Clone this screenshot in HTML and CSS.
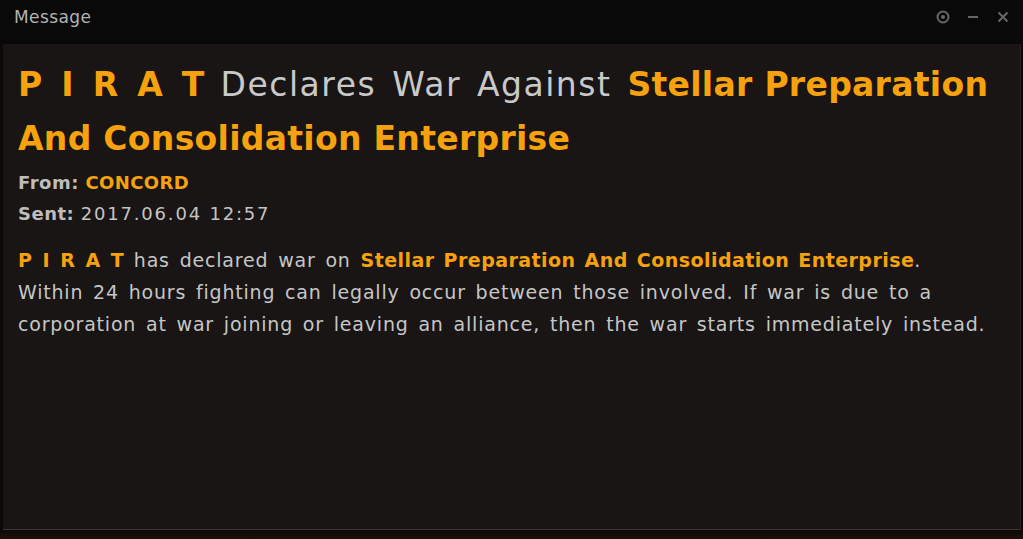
FILE: index.html
```html
<!DOCTYPE html>
<html>
<head>
<meta charset="utf-8">
<link rel="stylesheet" href="styles.css">
</head>
<body>
<div class="window">
  <div class="titlebar">
    <span class="title">Message</span>
    <div class="controls">
      <svg class="icon" width="16" height="16" viewBox="0 0 16 16"><circle cx="8" cy="8" r="5.5" fill="none" stroke="#666" stroke-width="2"/><circle cx="8" cy="8" r="2" fill="#666"/></svg>
      <svg class="icon" width="16" height="16" viewBox="0 0 16 16"><rect x="3" y="7" width="10" height="2" fill="#666"/></svg>
      <svg class="icon" width="16" height="16" viewBox="0 0 16 16"><path d="M3.5 3.5 L12.5 12.5 M12.5 3.5 L3.5 12.5" stroke="#666" stroke-width="2"/></svg>
    </div>
  </div>
  <div class="panel">
    <h1 class="headline"><span class="hl spaced">P I R A T</span> Declares War Against <span class="hl">Stellar Preparation And Consolidation Enterprise</span></h1>
    <div class="meta">
      <div class="meta-row"><span class="label">From:</span> <span class="hl">CONCORD</span></div>
      <div class="meta-row"><span class="label">Sent:</span> <span class="date">2017.06.04 12:57</span></div>
    </div>
    <p class="body"><span class="hl spaced">P I R A T</span> has declared war on <span class="hl">Stellar Preparation And Consolidation Enterprise</span>.<br>Within 24 hours fighting can legally occur between those involved. If war is due to a corporation at war joining or leaving an alliance, then the war starts immediately instead.</p>
  </div>
  <div class="footer-strip"></div>
</div>
</body>
</html>
```

FILE: styles.css
```css
* { box-sizing: border-box; }
html, body { margin: 0; padding: 0; }
body {
  width: 1023px;
  height: 539px;
  overflow: hidden;
  background: #0a0909;
  font-family: "DejaVu Sans", sans-serif;
}
.window {
  display: flex;
  flex-direction: column;
  height: 539px;
}
.titlebar {
  height: 44px;
  display: flex;
  align-items: flex-start;
  justify-content: space-between;
  padding: 7px 10px 0 14px;
}
.title {
  color: #b3b3b3;
  font-size: 17px;
  letter-spacing: 0.4px;
}
.controls {
  display: flex;
  gap: 14px;
  padding: 2px 2px 0 0;
}
.panel {
  margin: 0 2px 0 3px;
  height: 486px;
  background: #181514;
  border-bottom: 1px solid #3a3632;
  border-right: 1px solid #26221f;
  padding: 14px 15px 0 15px;
}
.headline {
  margin: 0;
  font-size: 33px;
  font-weight: normal;
  line-height: 54px;
  color: #c9c9c9;
  letter-spacing: 1.5px;
  word-spacing: 4px;
}
.hl {
  color: #f6a20e;
  font-weight: bold;
}
.headline .hl { letter-spacing: 0.3px; word-spacing: 0; }
.headline .spaced { letter-spacing: 0.3px; word-spacing: 7px; }
.meta {
  margin-top: 1px;
  font-size: 18px;
  color: #c4c4c4;
  letter-spacing: 0.8px;
}
.meta-row { line-height: 31px; }
.meta .hl { letter-spacing: 0.4px; }
.label { font-weight: bold; color: #bdbdbd; letter-spacing: 0.5px; }
.date { letter-spacing: 1.8px; }
.body {
  margin: 15px 0 0 0;
  font-size: 19px;
  line-height: 32px;
  color: #c6c6c6;
  letter-spacing: 0.8px;
  word-spacing: 3px;
}
.body .hl { letter-spacing: 0.45px; word-spacing: 2px; }
.body .spaced { letter-spacing: 0.25px; word-spacing: 3.5px; }
.footer-strip {
  flex: 1;
  background: linear-gradient(#0c0806, #1a120a);
}
```
